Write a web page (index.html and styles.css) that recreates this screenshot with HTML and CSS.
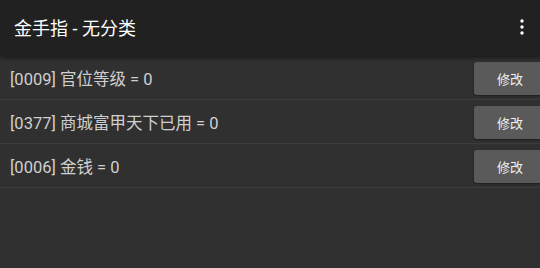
FILE: index.html
```html
<!DOCTYPE html>
<html>
  <head>
    <title>金手指</title>
    <link rel="stylesheet" href="styles.css">
  </head>
  <body>
    <div class="app-bar">
      <div class="title">金手指 - 无分类</div>
      <button class="menu-button" aria-label="更多">
        <svg width="4" height="16" viewBox="0 0 4 16">
          <circle cx="2" cy="2" r="1.7" fill="#fff" />
          <circle cx="2" cy="8" r="1.7" fill="#fff" />
          <circle cx="2" cy="14" r="1.7" fill="#fff" />
        </svg>
      </button>
    </div>

    <div class="cheat-list">
      <div class="cheat-item">
        <span class="cheat-text">[0009] 官位等级 = 0</span>
        <button class="edit-button">修改</button>
      </div>
      <div class="cheat-item">
        <span class="cheat-text">[0377] 商城富甲天下已用 = 0</span>
        <button class="edit-button">修改</button>
      </div>
      <div class="cheat-item">
        <span class="cheat-text">[0006] 金钱 = 0</span>
        <button class="edit-button">修改</button>
      </div>
    </div>
  </body>
</html>
```

FILE: styles.css
```css
body {
  font-family: Roboto, "Noto Sans CJK SC", sans-serif;
  margin: 0;
  background: #303030;
  color: #d2d2d2;
  width: 540px;
  height: 268px;
  overflow: hidden;
}

.app-bar {
  height: 56px;
  display: flex;
  align-items: center;
  justify-content: space-between;
  padding: 0 14px;
  background: #212121;
  box-shadow: 0 2px 4px rgba(0, 0, 0, 0.45);
  position: relative;
  z-index: 1;
}

.title {
  font-size: 18px;
  font-weight: 400;
  color: #ffffff;
  margin-top: -2px;
}

.menu-button {
  background: none;
  border: none;
  padding: 0;
  margin-right: 2px;
  margin-top: -2px;
  display: flex;
}

.cheat-list {
  display: flex;
  flex-direction: column;
}

.cheat-item {
  height: 43px;
  display: flex;
  align-items: flex-start;
  justify-content: space-between;
  padding-left: 10px;
  border-bottom: 1px solid #3c3c3c;
}

.cheat-text {
  font-size: 16.5px;
  line-height: 44px;
  padding-top: 2px;
  color: #cfcfcf;
}

.edit-button {
  margin-top: 6px;
  width: 70px;
  height: 33px;
  margin-right: -4px;
  padding: 0 0 0 23px;
  text-align: left;
  border: none;
  border-radius: 3px;
  background: #5a5a5a;
  color: #f0f0f0;
  font-family: Roboto, "Noto Sans CJK SC", sans-serif;
  font-size: 13px;
  box-shadow: 0 1px 2px rgba(0, 0, 0, 0.4);
}
```
